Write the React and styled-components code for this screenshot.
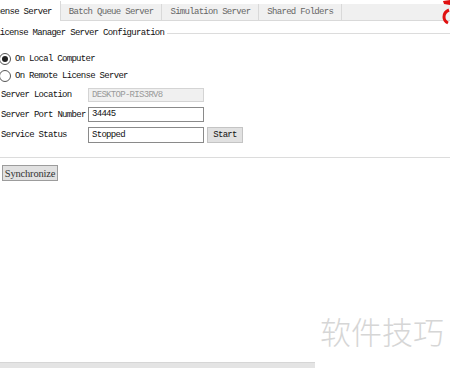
import React from "react";
import styled, { createGlobalStyle } from "styled-components";

const Global = createGlobalStyle`
  html, body { margin: 0; padding: 0; background: #fff; overflow: hidden; }
`;

const Root = styled.div`
  position: relative;
  width: 450px;
  height: 368px;
  overflow: hidden;
  display: flex;
  flex-direction: column;
  font-family: "Liberation Mono", monospace;
  font-size: 9px;
  letter-spacing: -0.7px;
  color: #111;
`;

const TabStrip = styled.div`
  display: flex;
  margin-top: 4px;
  margin-left: -22px;
  height: 16px;
  background: #f0f0f0;
  border-bottom: 1px solid #d9d9d9;
`;

const Tab = styled.div`
  padding: 0 8px;
  line-height: 16px;
  border-right: 1px solid #d9d9d9;
  color: ${(p) => (p.$active ? "#111" : "#666")};
  background: ${(p) => (p.$active ? "#fff" : "transparent")};
  white-space: nowrap;
  ${(p) => p.$active && "margin-top: -3px; height: 20px; line-height: 22px;"}
`;

const Content = styled.div`
  display: flex;
  flex-direction: column;
  flex: 1;
`;

const GroupTitle = styled.div`
  display: flex;
  align-items: center;
  gap: 3px;
  margin-top: 7px;
  margin-left: -5px;
  height: 10px;
  line-height: 10px;
  white-space: nowrap;
`;

const Line = styled.div`
  flex: 1;
  height: 1px;
  background: #dcdcdc;
`;

const RadioRow = styled.label`
  display: flex;
  align-items: center;
  gap: 4px;
  height: 14px;
  margin-top: ${(p) => p.$mt}px;
  margin-left: -1px;
  white-space: nowrap;
`;

const RadioCircle = styled.span`
  width: 10px;
  height: 10px;
  border-radius: 50%;
  border: 1px solid #555;
  background: #fff;
  display: flex;
  align-items: center;
  justify-content: center;
  &::after {
    content: "";
    width: 6px;
    height: 6px;
    border-radius: 50%;
    background: ${(p) => (p.$checked ? "#222" : "transparent")};
  }
`;

const Form = styled.div`
  display: flex;
  flex-direction: column;
  gap: 5px;
  margin-top: 4px;
  padding-left: 1px;
`;

const FormRow = styled.div`
  display: flex;
  align-items: center;
  height: ${(p) => p.$h || 15}px;
`;

const Label = styled.div`
  width: 87px;
  white-space: nowrap;
`;

const Input = styled.div`
  box-sizing: border-box;
  width: 116px;
  height: ${(p) => p.$h || 15}px;
  line-height: ${(p) => (p.$h || 15) - 2}px;
  padding: 0 3px;
  border: 1px solid ${(p) => (p.$disabled ? "#d4d4d4" : "#8a8a8a")};
  background: ${(p) => (p.$disabled ? "#f0f0f0" : "#fff")};
  color: ${(p) => (p.$disabled ? "#9a9a9a" : "#111")};
  white-space: nowrap;
`;

const Button = styled.div`
  box-sizing: border-box;
  height: 16px;
  width: ${(p) => p.$w}px;
  margin-left: ${(p) => p.$ml || 0}px;
  background: #e1e1e1;
  border: 1px solid ${(p) => p.$border || "#c4c4c4"};
  display: flex;
  align-items: center;
  justify-content: center;
  white-space: nowrap;
`;

const SyncButton = styled(Button)`
  font-family: "Liberation Serif", serif;
  font-size: 10.5px;
  letter-spacing: -0.2px;
  color: #333;
  margin-top: 7px;
  margin-left: 2px;
`;

const Separator = styled.div`
  height: 1px;
  background: #dcdcdc;
  margin-top: 14px;
`;

const BottomBar = styled.div`
  margin-top: auto;
  width: 315px;
  height: 5px;
  background: #e4e4e4;
  border-top: 1px solid #d6d6d6;
`;

const Watermark = styled.div`
  position: absolute;
  left: 320px;
  top: 315px;
  font-family: "Noto Sans CJK SC", sans-serif;
  font-size: 31px;
  line-height: 1;
  letter-spacing: 0;
  font-weight: 300;
  color: #d6d6d6;
`;

const RedMark = styled.svg`
  position: absolute;
  right: 0;
  top: 0;
`;

export default function App() {
  return (
    <Root>
      <Global />
      <TabStrip>
        <Tab $active>License Server</Tab>
        <Tab>Batch Queue Server</Tab>
        <Tab>Simulation Server</Tab>
        <Tab>Shared Folders</Tab>
      </TabStrip>
      <Content>
        <GroupTitle>
          <span>License Manager Server Configuration</span>
          <Line />
        </GroupTitle>
        <RadioRow $mt={14}>
          <RadioCircle $checked />
          <span>On Local Computer</span>
        </RadioRow>
        <RadioRow $mt={3}>
          <RadioCircle />
          <span>On Remote License Server</span>
        </RadioRow>
        <Form>
          <FormRow>
            <Label>Server Location</Label>
            <Input $disabled $h={14}>DESKTOP-RIS3RV8</Input>
          </FormRow>
          <FormRow>
            <Label>Server Port Number</Label>
            <Input>34445</Input>
          </FormRow>
          <FormRow $h={16}>
            <Label>Service Status</Label>
            <Input $h={16}>Stopped</Input>
            <Button $w={36} $ml={3}>Start</Button>
          </FormRow>
        </Form>
        <Separator />
        <SyncButton $w={56} $border="#9c9c9c">Synchronize</SyncButton>
        <BottomBar />
      </Content>
      <Watermark>软件技巧</Watermark>
      <RedMark width="10" height="26" viewBox="0 0 10 26">
        <path d="M3 1 L10 0 L10 5 L4 4 Z" fill="#e01010" />
        <path d="M9 10 Q4 12 4 17 Q4 21 8 23" stroke="#e01010" strokeWidth="3" fill="none" />
      </RedMark>
    </Root>
  );
}
